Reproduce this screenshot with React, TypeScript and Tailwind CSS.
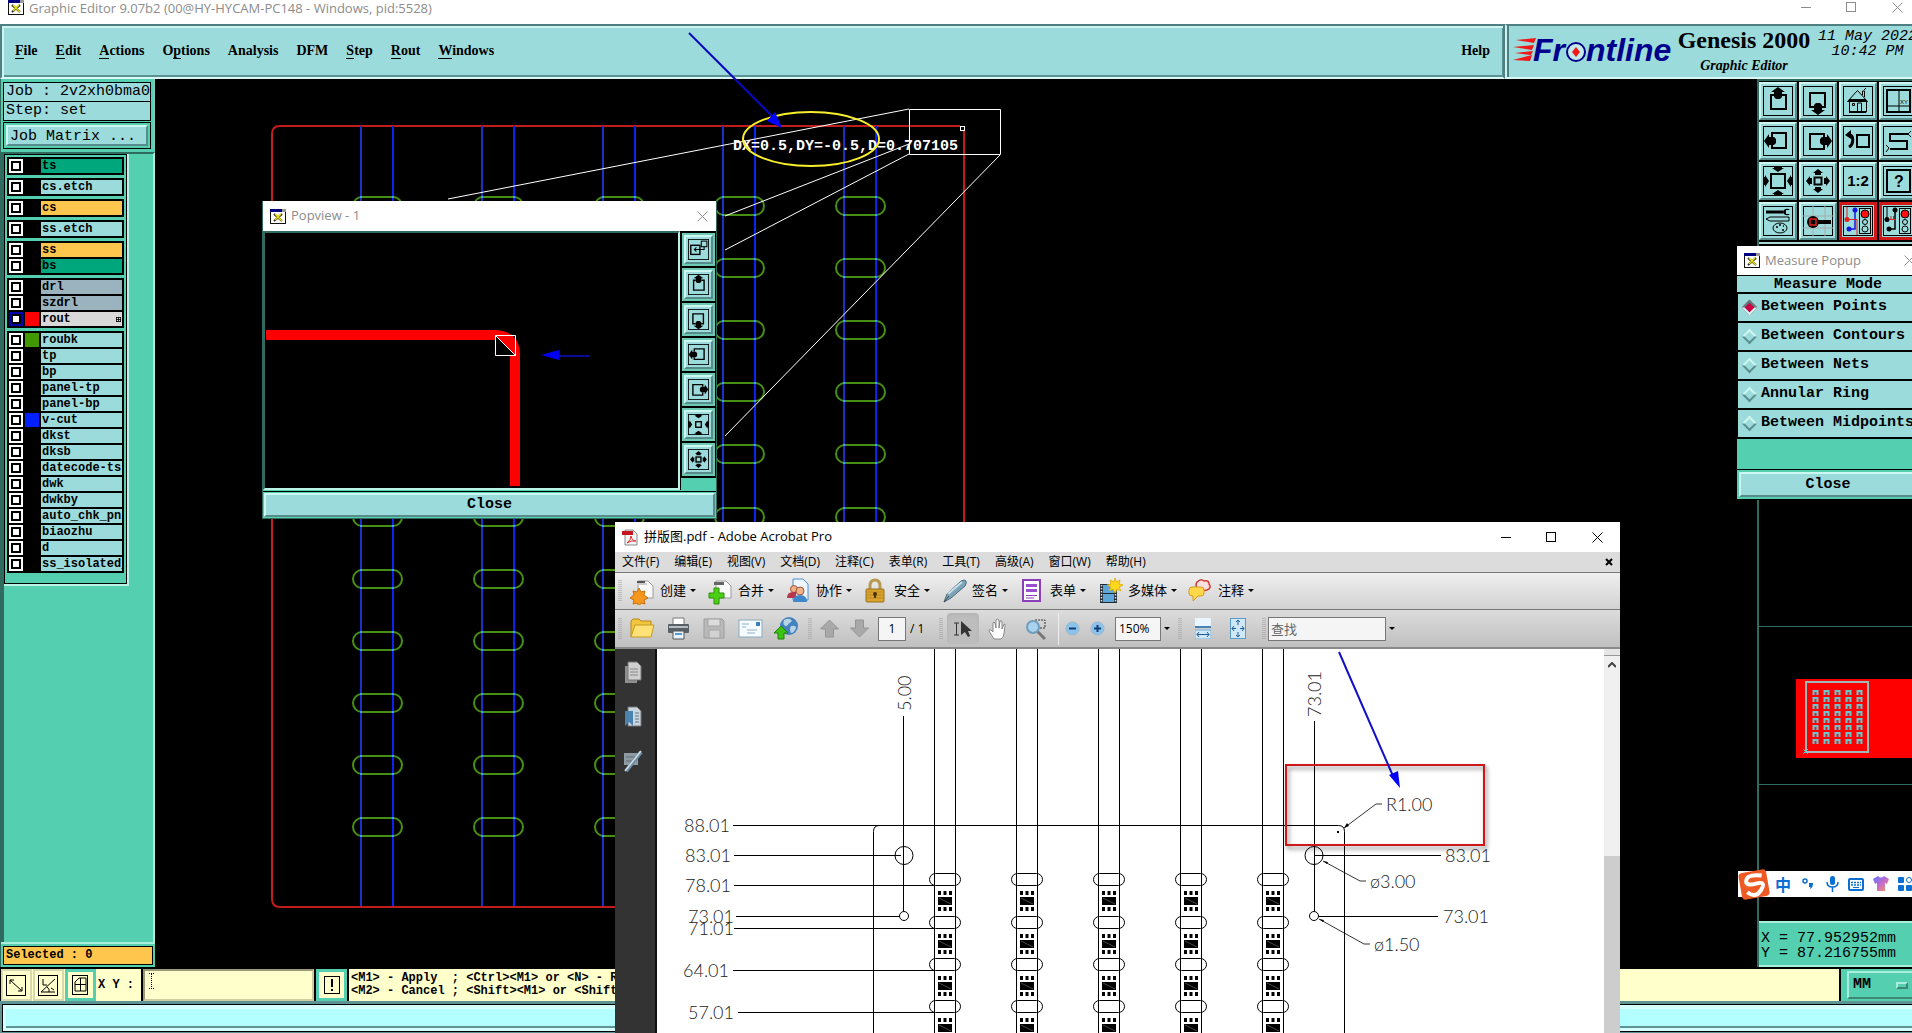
import type { ReactNode } from 'react'

const mono = "font-['Liberation_Mono','Courier_New',monospace] font-bold"
const serif = "font-['Liberation_Serif','Times_New_Roman',serif] font-bold"
const ui = "font-['Open_Sans','Noto_Sans_CJK_SC',sans-serif]"

const raised = 'border-2 border-t-[#cdf7f1] border-l-[#cdf7f1] border-r-[#578c8a] border-b-[#578c8a] bg-[#9cdbdb]'

const menus = [
  { key: 'F', pre: '', rest: 'ile' },
  { key: 'E', pre: '', rest: 'dit' },
  { key: 'A', pre: '', rest: 'ctions' },
  { key: 'p', pre: 'O', rest: 'tions' },
  { key: '', pre: '', rest: 'Analysis' },
  { key: '', pre: '', rest: 'DFM' },
  { key: 'S', pre: '', rest: 'tep' },
  { key: 'R', pre: '', rest: 'out' },
  { key: 'W', pre: '', rest: 'indows' },
]

type Layer = { name: string; bg?: string; swatch?: string; active?: boolean }

const layerGroups: Layer[][] = [
  [{ name: 'ts', bg: 'bg-[#00a67c]' }],
  [{ name: 'cs.etch' }],
  [{ name: 'cs', bg: 'bg-[#ffc64d]' }],
  [{ name: 'ss.etch' }],
  [{ name: 'ss', bg: 'bg-[#ffc64d]' }, { name: 'bs', bg: 'bg-[#00a67c]' }],
  [
    { name: 'drl', bg: 'bg-[#9bb3bf]' },
    { name: 'szdrl', bg: 'bg-[#9bb3bf]' },
    { name: 'rout', bg: 'bg-[#d9d9d9]', swatch: 'bg-[#ff0000]', active: true },
  ],
  [
    { name: 'roubk', swatch: 'bg-[#409900]' },
    { name: 'tp' },
    { name: 'bp' },
    { name: 'panel-tp' },
    { name: 'panel-bp' },
    { name: 'v-cut', swatch: 'bg-[#0020ff]' },
    { name: 'dkst' },
    { name: 'dksb' },
    { name: 'datecode-ts' },
    { name: 'dwk' },
    { name: 'dwkby' },
    { name: 'auto_chk_pnl' },
    { name: 'biaozhu' },
    { name: 'd' },
    { name: 'ss_isolated_' },
  ],
]

function AppIcon() {
  return (
    <svg width="16" height="15" viewBox="0 0 16 15" className="shrink-0">
      <rect width="16" height="15" fill="#111" />
      <rect x="1" y="3" width="14" height="11" fill="#fff" />
      <rect width="12" height="3" fill="#000080" />
      <rect x="12" width="4" height="3" fill="#999" />
      <path d="M4 5l8 7M12 5l-8 7" stroke="#222" strokeWidth="2" />
      <path d="M5 5l7 7M11 5l-6 6" stroke="#e8e000" strokeWidth="1.5" />
    </svg>
  )
}

function CloseIcon() {
  return (
    <svg width="11" height="11" viewBox="0 0 11 11" stroke="currentColor" fill="none">
      <path d="M.5 .5l10 10M10.5 .5l-10 10" />
    </svg>
  )
}

function WindowControls({ className }: { className: string }) {
  return (
    <div className={`flex items-center gap-[35px] ${className}`}>
      <button aria-label="Minimize">
        <svg width="10" height="11" stroke="currentColor"><path d="M0 5.5h10" /></svg>
      </button>
      <button aria-label="Maximize">
        <svg width="11" height="11" stroke="currentColor" fill="none"><rect x=".5" y=".5" width="9" height="9" /></svg>
      </button>
      <button aria-label="Close"><CloseIcon /></button>
    </div>
  )
}

const arrowBlob = 'M15 1l7 5h-3v5l-2 2h-4l-2-2V6H8z'

function Glyph({ name, size }: { name: string; size: number }) {
  const turn: Record<string, number> = { up: 0, right: 90, down: 180, left: 270 }
  let body: ReactNode = null
  if (name in turn) {
    body = (
      <g transform={`rotate(${turn[name]} 15 15)`}>
        <path d="M11 9H8v14h15V9h-4" fill="none" stroke="#000" strokeWidth="2" />
        <path d={arrowBlob} />
      </g>
    )
  } else if (name === 'home') {
    body = (
      <g fill="none" stroke="#000">
        <path d="M4.5 15.5L14.5 4.5l10 11zM6.5 15v11h17V15M14.5 26v-9h4v9M9.5 17.5h2v2h-2zM19.5 9V5h2v6M21 4l2-2" />
        <path d="M6 26h17M6 14h17" strokeWidth="2" />
      </g>
    )
  } else if (name === 'xy') {
    body = (
      <>
        <rect x="4" y="4" width="23" height="22" fill="none" stroke="#000" strokeWidth="2" />
        <path d="M16 4v22M4 20h23" stroke="#000" />
        <text x="17" y="18" className="font-['Liberation_Sans',sans-serif] text-[6px]">XY</text>
      </>
    )
  } else if (name === 'undo') {
    body = (
      <>
        <rect x="14" y="9" width="12" height="12" fill="none" stroke="#000" strokeWidth="2" />
        <path d="M6 9c5 0 5 9 0 12" fill="none" stroke="#000" strokeWidth="3" />
        <path d="M2 9l6-5v9z" />
      </>
    )
  } else if (name === 'path') {
    body = (
      <>
        <path d="M26 8H7v7h17v8H7" fill="none" stroke="#000" strokeWidth="2" />
        <path d="M25 8l3-3M25 8l3 3M6 22l-3-3M6 22l-3 4" stroke="#000" />
      </>
    )
  } else if (name === 'in' || name === 'in-s') {
    const box = name === 'in' ? [8, 8, 14, 14] : [11, 11, 8, 8]
    body = (
      <>
        <rect x={box[0]} y={box[1]} width={box[2]} height={box[3]} fill="none" stroke="#000" strokeWidth="2" />
        {[0, 90, 180, 270].map((a) => (
          <path key={a} transform={`rotate(${a} 15 15)`} d="M11 0h8v2h2l-6 4l-6-4h2z" />
        ))}
      </>
    )
  } else if (name === 'out') {
    body = (
      <>
        <rect x="11.5" y="11.5" width="7" height="7" fill="none" stroke="#000" strokeWidth="2" />
        {[0, 90, 180, 270].map((a) => (
          <path key={a} transform={`rotate(${a} 15 15)`} d="M15 3l5 4h-2v2h-6V7h-2z" />
        ))}
      </>
    )
  } else if (name === '1:2') {
    body = (
      <text x="15" y="20" textAnchor="middle" className="font-['Liberation_Sans',sans-serif] text-[15px] font-bold">1:2</text>
    )
  } else if (name === 'help') {
    body = (
      <>
        <rect x="4" y="4" width="23" height="22" fill="none" stroke="#000" strokeWidth="2" />
        <text x="16" y="21" textAnchor="middle" className="font-['Liberation_Sans',sans-serif] text-[16px] font-bold">?</text>
      </>
    )
  } else if (name === 'tools') {
    body = (
      <>
        <path d="M3 6h17" stroke="#000" strokeWidth="3" />
        <path d="M27 4a4 3 0 1 0 0 4h-4V4z" />
        <path d="M3 13l4-2h19v4H7z" fill="none" stroke="#000" />
        <ellipse cx="17" cy="22" rx="7" ry="5" fill="none" stroke="#000" />
        <path d="M13 21h2M16 19h2M20 20h1M19 24h2" stroke="#000" strokeWidth="1.5" />
      </>
    )
  } else if (name === 'probe') {
    body = (
      <>
        <path d="M10 0v30M22 0v30M0 10h30M0 22h30" stroke="#a9a9a9" />
        <circle cx="10" cy="16" r="6" />
        <path d="M14 16h14" stroke="#000" strokeWidth="4" />
        <rect x="7" y="13" width="6" height="6" fill="none" stroke="#e02020" strokeWidth="1.5" />
      </>
    )
  } else if (name === 'net' || name === 'net2') {
    const c = name === 'net' ? '#1515e8' : '#000'
    const d = name === 'net' ? '#e02020' : '#000'
    body = (
      <>
        <path d="M4 1v12" fill="none" stroke={d} />
        <path d="M6 23h6V4" fill="none" stroke={c} strokeWidth="1.5" />
        <path d={name === 'net' ? 'M4 13.5h10V29' : 'M7 13.5h6M8 10v4M10.5 10v4'} fill="none" stroke="#e02020" />
        <circle cx="4" cy="13.5" r="2.5" fill={d} />
        <circle cx="12" cy="4" r="2.5" fill={c} />
        <circle cx="6" cy="23" r="2.5" fill={c} />
        <rect x="16.5" y="2.5" width="11" height="25" fill="none" stroke="#000" />
        <circle cx="22" cy="8" r="4" fill="#ff1010" stroke="#000" />
        <circle cx="22" cy="16" r="2.5" fill="none" stroke="#000" />
        <circle cx="22" cy="23" r="3" fill="none" stroke="#000" />
      </>
    )
  } else if (name === 'popview') {
    body = (
      <>
        <rect x="4" y="9" width="13" height="13" fill="none" stroke="#000" strokeWidth="2" />
        <rect x="19" y="3" width="8" height="8" fill="none" stroke="#000" strokeWidth="1.5" />
        <path d="M23 11v4H9M12 12l-3 3l3 3" fill="none" stroke="#000" strokeWidth="1.5" />
      </>
    )
  }
  return (
    <svg width={size} height={size} viewBox="0 0 30 30" className="shrink-0">
      <rect x=".5" y=".5" width="29" height="29" fill="#9cdbdb" stroke="#000" strokeWidth={30 / size} />
      {body}
    </svg>
  )
}

const tools = ['up', 'down', 'home', 'xy', 'left', 'right', 'undo', 'path', 'in', 'out', '1:2', 'help', 'tools', 'probe', 'net', 'net2']

function LayerRow({ layer }: { layer: Layer }) {
  return (
    <label className="flex h-4 items-center gap-[2px]">
      <input
        type="checkbox"
        aria-label={layer.name}
        className={`size-[14px] shrink-0 appearance-none border-2 bg-white outline-2 -outline-offset-4 outline-black ${layer.active ? 'border-[#0000b0]' : 'border-white'}`}
      />
      <span className={`size-[14px] shrink-0 ${layer.swatch ?? 'bg-black'}`} />
      <span className={`flex h-[14px] min-w-0 flex-1 items-center justify-between overflow-hidden px-px text-xs leading-[14px] whitespace-nowrap ${layer.bg ?? 'bg-[#9cdbdb]'}`}>
        {layer.name}
        {layer.active && (
          <svg width="5" height="5" className="shrink-0"><path d="M0 .5h5M0 2.5h5M0 4.5h5M.5 0v5M2.5 0v5M4.5 0v5" stroke="#000" strokeWidth=".8" /></svg>
        )}
      </span>
    </label>
  )
}

function LeftPanel() {
  return (
    <aside className={`${mono} flex w-[155px] shrink-0 flex-col border-l border-[#2f6b5f] bg-[#54cfb0]`}>
      <div className="flex flex-col border-r-2 border-[#7cc9bd] px-[2px] pt-[3px]">
        <div className="h-5 border border-black bg-[#9cdbdb] px-[2px] text-[15px] leading-[18px] font-normal whitespace-nowrap">Job : 2v2xh0bma0</div>
        <div className="-mt-px h-5 border border-black bg-[#9cdbdb] px-[2px] text-[15px] leading-[18px] font-normal">Step: set</div>
        <div className="mt-px h-[27px] border border-black p-[2px]">
          <button className={`${raised} block h-full w-full px-[2px] text-left text-[15px] leading-[19px] font-normal`}>Job Matrix ...</button>
        </div>
      </div>
      <div className="mt-[3px] flex-1 border-t-2 border-r-2 border-l-[3px] border-t-[#2f6b5f] border-r-[#a9eedd] border-l-[#2f6b5f]">
        <div className="w-[125px] border-r-2 border-b-2 border-[#b8f3e6]">
          <div className="flex flex-col gap-[3px] border border-black px-[2px] pt-[2px] pb-[10px]">
            {layerGroups.map((g, i) => (
              <div key={i} className="bg-black px-[2px] py-px">
                {g.map((l) => <LayerRow key={l.name} layer={l} />)}
              </div>
            ))}
          </div>
        </div>
      </div>
      <div className="border-t-2 border-[#a9eedd] p-[2px]">
        <div className="h-[19px] border border-black bg-[#ffc64d] px-[2px] text-xs leading-[17px]">Selected : 0</div>
      </div>
    </aside>
  )
}

function BoardCanvas() {
  const cols = [361, 482, 603, 723, 844]
  const rows = Array.from({ length: 11 }, (_, i) => Math.round(197 + i * 62.1))
  return (
    <div className="min-w-0 flex-1 overflow-hidden bg-black">
      <svg width="1602" height="888" viewBox="155 79 1602 888" fill="none">
        <path d="M964 131v776H280q-8 0-8-8V134q0-8 8-8h680" stroke="#c01c1c" strokeWidth="2" />
        {cols.map((x) => (
          <g key={x}>
            {rows.map((y) => <rect key={y} x={x - 8} y={y} width="49" height="18" rx="9" stroke="#478f14" strokeWidth="2" />)}
            <path d={`M${x} 126V906`} stroke="#1c30c8" strokeWidth="2" />
            <path d={`M${x + 32} 126V906`} stroke="#0a24ee" strokeWidth="2" />
            {rows.map((y) => (
              <path key={y} d={`M${x} ${y - 1}v2M${x} ${y + 17}v2M${x + 32} ${y - 1}v2M${x + 32} ${y + 17}v2`} stroke="#3fa0ff" strokeWidth="2" />
            ))}
          </g>
        ))}
        <g stroke="#fff">
          <path d="M909.5 109.5h91v45h-91zM909 109L448 199M909 144L725 216M909 154L725 250M1000 155L725 436" />
          <rect x="960.5" y="126.5" width="4" height="4" />
        </g>
        <text x="733" y="150" fill="#fff" className={`${mono} text-[15px]`}>DX=0.5,DY=-0.5,D=0.707105</text>
        <ellipse cx="811" cy="139" rx="68" ry="27" stroke="#f7ee2c" strokeWidth="2" />
      </svg>
    </div>
  )
}

function Overview() {
  const cols = [1813, 1824, 1835, 1846, 1857]
  return (
    <svg width="153" height="677" viewBox="1759 244 153 677" fill="none" className="block">
      <path d="M1759 626.5h153M1759 784.5h153" stroke="#2f6b5f" />
      <rect x="1796" y="679" width="116" height="79" fill="#f00" />
      <rect x="1806" y="682" width="62" height="70" stroke="#9fb9b9" strokeWidth="2" />
      {cols.map((x) => (
        <g key={x}>
          <path d={`M${x + 2.5} 690v56`} stroke="#6fc4cc" strokeWidth="6" strokeDasharray="5 2" />
          <path d={`M${x + 2.5} 692v54`} stroke="#c03030" strokeWidth="2" strokeDasharray="3 4" />
        </g>
      ))}
      <path d="M1803 749l5 5M1808 749l-5 5" stroke="#5fd0d8" />
    </svg>
  )
}

function RightPanel() {
  return (
    <aside className="flex w-[155px] shrink-0 flex-col overflow-hidden border-l-2 border-[#2f6b5f] bg-black">
      <div className="flex w-[160px] flex-wrap gap-[2px] border-t-2 border-b-2 border-t-[#2f6b5f] border-b-[#a9d8d0] pt-px pb-[2px]">
        {tools.map((t) => (
          <button
            key={t}
            aria-label={t}
            className={`flex size-[38px] items-center justify-center bg-[#9cdbdb] ${
              t.startsWith('net')
                ? 'border-[3px] border-[#d01818]'
                : 'border-2 border-t-[#cdf7f1] border-r-[#578c8a] border-b-[#578c8a] border-l-[#cdf7f1]'
            }`}
          >
            <Glyph name={t} size={30} />
          </button>
        ))}
      </div>
      <div className="flex-1 overflow-hidden"><Overview /></div>
      <div className={`${mono} h-[46px] border-t-2 border-b-2 border-[#a9eedd] bg-[#54cfb0] px-[2px] pt-2 text-[15px] leading-[15px] font-normal whitespace-pre`}>
        <div>X = 77.952952mm</div>
        <div>Y = 87.216755mm</div>
      </div>
    </aside>
  )
}

function Popview() {
  return (
    <section className="absolute top-[201px] left-[262px] flex w-[455px] flex-col border-x border-b border-[#2f6b5f] bg-[#54cfb0]">
      <header className={`${ui} flex h-[30px] items-center gap-[5px] bg-white pr-2 pl-[7px] text-[13px] text-[#8c8c8c]`}>
        <AppIcon />
        <span className="flex-1">Popview - 1</span>
        <button aria-label="Close popview"><CloseIcon /></button>
      </header>
      <div className="flex bg-black">
        <div className="flex-1 overflow-hidden border-2 border-t-[#2f6b5f] border-r-[#b8f3e6] border-b-[#b8f3e6] border-l-[#2f6b5f]">
          <svg width="413" height="255" viewBox="265 233 413 255" className="block">
            <path d="M266 330h230q24 2 24 25v131h-10V352l-14-12H266z" fill="#f00" />
            <path d="M495.5 335.5h20v20h-20z" stroke="#fff" fill="none" />
            <path d="M496 336v19h19z" fill="#000" />
            <path d="M495 335l21 21" stroke="#fff" />
            <path d="M590 356h-32" stroke="#0b0b98" strokeWidth="2" />
            <path d="M541 355l18-5v10z" fill="#0000f0" />
          </svg>
        </div>
        <div className="flex w-9 flex-col gap-[2px] pt-[2px] pl-[2px]">
          {['popview', 'up', 'down', 'left', 'right', 'in-s', 'out'].map((t) => (
            <div key={t} className="size-[33px] border-2 border-[#6cc9b4]">
              <button aria-label={`popview ${t}`} className={`${raised} flex size-full items-center justify-center`}>
                <Glyph name={t} size={21} />
              </button>
            </div>
          ))}
          <div className="-ml-px flex-1 bg-[#54cfb0]" />
        </div>
      </div>
      <div className="mt-px border-t border-black p-px">
        <button className={`${mono} ${raised} block h-6 w-full text-[15px] leading-5`}>Close</button>
      </div>
    </section>
  )
}

const modes = ['Between Points', 'Between Contours', 'Between Nets', 'Annular Ring', 'Between Midpoints']

function MeasurePopup() {
  return (
    <section className={`${mono} absolute top-[246px] left-[1736px] flex w-[184px] flex-col border-x border-b border-black bg-[#54cfb0] text-[15px]`}>
      <header className={`${ui} flex h-[29px] items-center gap-[5px] bg-white pl-[7px] text-[13px] font-normal text-[#8c8c8c]`}>
        <AppIcon />
        <span className="w-[134px]">Measure Popup</span>
        <button aria-label="Close measure popup" className="shrink-0"><CloseIcon /></button>
      </header>
      <fieldset aria-labelledby="measure-mode" className="flex flex-col gap-[2px] border-t border-b-2 border-black bg-black">
        <div id="measure-mode" className="h-4 bg-[#9cdbdb] text-center leading-[17px]">Measure Mode</div>
        {modes.map((m, i) => (
          <label key={m} className="ml-px flex h-[27px] items-center gap-[6px] bg-[#9cdbdb] pl-[6px] whitespace-nowrap">
            <input
              type="radio"
              name="mode"
              defaultChecked={i === 0}
              className="size-[11px] shrink-0 rotate-45 appearance-none border-2 border-t-[#cdf7f1] border-r-[#5b8f8d] border-b-[#5b8f8d] border-l-[#cdf7f1] checked:border-t-[#5b7f7d] checked:border-r-[#cdf7f1] checked:border-b-[#cdf7f1] checked:border-l-[#5b7f7d] checked:bg-[#cc0044]"
            />
            {m}
          </label>
        ))}
      </fieldset>
      <div className="mt-[30px] border-t border-black p-[2px]">
        <button className={`${raised} block h-[25px] w-full leading-[21px]`}>Close</button>
      </div>
    </section>
  )
}

/* ---------- Acrobat ---------- */

const pdfMenus = ['文件(F)', '编辑(E)', '视图(V)', '文档(D)', '注释(C)', '表单(R)', '工具(T)', '高级(A)', '窗口(W)', '帮助(H)']

function Caret() {
  return <svg width="6" height="4" className="shrink-0"><path d="M0 0h6L3 3z" /></svg>
}

function Grip() {
  return (
    <svg width="4" height="24" className="shrink-0">
      <path d="M1 1v22M3 1v22" stroke="#9a9a9a" strokeDasharray="1 1" />
    </svg>
  )
}

const page = <path d="M8 3h10l5 5v12H8z" fill="#fafafa" stroke="#9a9a9a" />

const tasks: { label: string; wide?: boolean; icon: ReactNode }[] = [
  {
    label: '创建',
    icon: (
      <>
        {page}
        <path d="M7 3h8v4H7z" fill="#555" /><path d="M7 6h10" stroke="#ccc" strokeWidth="2" />
        <path d="M9 10l2 4 4-1-1 4 4 3-4 2 1 4-4-1-2 3-2-3-4 1 1-4-4-2 4-3-1-4 4 1z" fill="#f6981d" stroke="#c96f0c" />
      </>
    ),
  },
  {
    label: '合并',
    icon: (
      <>
        {page}
        <path d="M6 4h10v3H6z" fill="#666" />
        <path d="M6 10h5v5h5v5h-5v6H6v-6H1v-5h5z" fill="#4cd015" stroke="#2a8f0a" />
      </>
    ),
  },
  {
    label: '协作',
    icon: (
      <>
        <path d="M7 1h10l5 5v16H7z" fill="#eef6ff" stroke="#4a90d0" />
        <circle cx="8" cy="11" r="3.5" fill="#f0b088" stroke="#a0583a" /><path d="M1 20q0-6 6-6h3v6z" fill="#b8354e" />
        <circle cx="14" cy="13" r="4" fill="#f0b088" stroke="#a0583a" /><path d="M7 24q0-7 7-7t7 7z" fill="#3f87c8" />
      </>
    ),
  },
  {
    label: '安全',
    icon: (
      <>
        <path d="M6 12V8q0-6 5-6t5 6v4" fill="none" stroke="#b79a50" strokeWidth="3" />
        <rect x="2" y="11" width="18" height="13" rx="1" fill="#d9a32e" stroke="#94701c" />
        <path d="M3 14h16M3 17h16M3 20h16" stroke="#bf8a1e" />
        <circle cx="11" cy="16" r="2" fill="#4a3308" /><path d="M11 16v4" stroke="#4a3308" strokeWidth="2" />
      </>
    ),
  },
  {
    label: '签名',
    icon: (
      <>
        <path d="M2 24l3-8L19 3q4-2 5 0t-1 5L9 20z" fill="#7da3b8" stroke="#4d6b7c" />
        <path d="M6 16L20 4" stroke="#c9e0ec" strokeWidth="2" /><path d="M2 24l5-6" stroke="#444" />
      </>
    ),
  },
  {
    label: '表单',
    icon: (
      <>
        <rect x="3" y="2" width="17" height="21" fill="#fff" stroke="#8b3fb8" strokeWidth="2" />
        <path d="M6 6h11v3H6zM6 11h11v3H6z" fill="#9a4fd0" /><path d="M6 17.5h11M6 20h8" stroke="#8b3fb8" />
      </>
    ),
  },
  {
    label: '多媒体',
    wide: true,
    icon: (
      <>
        <rect x="2" y="6" width="17" height="19" fill="#1f2a33" />
        <path d="M5 7h11v8H5zM5 16h11v8H5z" fill="#5fa6d8" />
        <path d="M3.500 7v18M17.500 7v18" stroke="#dfe8ee" strokeWidth="1.5" strokeDasharray="1.5 1.5" />
        <path d="M17 0l1.500 4L22 2l-1 4 4 1-4 2 2 4-4-2-2 4-2-4-4 2 2-4-4-2 4-1-1-4 4 2z" fill="#ffd91c" stroke="#e0a800" strokeWidth=".8" />
      </>
    ),
  },
  {
    label: '注释',
    icon: (
      <>
        <path d="M9 4q4-4 7-1 5-1 5 3 3 4-2 6-9 2-10-2-2-3 0-6z" fill="#f8dede" stroke="#d23c34" strokeWidth="1.5" />
        <path d="M4 9h9q3 0 3 3v3q0 3-3 3h-3l-5 5v-5H4q-3 0-3-3v-3q0-3 3-3z" fill="#ffd94a" stroke="#d99a1c" />
      </>
    ),
  },
]

const fileIcons: Record<string, ReactNode> = {
  打开: (
    <>
      <path d="M1 21V5l2-2h6l2 2h10v4" fill="#f2c63c" stroke="#b88918" />
      <path d="M1 21L5 9h19l-3 12z" fill="#ffe277" stroke="#c79a20" />
    </>
  ),
  打印: (
    <>
      <path d="M7 2h11v7H7z" fill="#fff" stroke="#777" />
      <rect x="2" y="8" width="21" height="9" rx="1" fill="#5a6068" /><path d="M3 11h19" stroke="#b7bcc2" strokeWidth="2" />
      <path d="M7 15h11v8H7z" fill="#e8f3fb" stroke="#555" /><path d="M9 18h7" stroke="#5a9ad0" strokeWidth="2" />
    </>
  ),
  保存: (
    <>
      <path d="M2 3h18l2 2v17H2z" fill="#b9b9b9" stroke="#9c9c9c" />
      <path d="M6 3h12v7H6z" fill="#dcdcdc" stroke="#a4a4a4" /><path d="M7 14h11v8H7z" fill="#d2d2d2" stroke="#a4a4a4" />
    </>
  ),
  邮件: (
    <>
      <rect x="1" y="4" width="23" height="17" fill="#f6fbff" stroke="#8aa9bf" />
      <rect x="18" y="6" width="4" height="4" fill="#3b7fc0" /><path d="M4 8h7M4 11h4M9 14h10M9 17h8" stroke="#8fb0c8" />
    </>
  ),
  上载: (
    <>
      <circle cx="15" cy="10" r="9" fill="#4583be" /><path d="M10 4q6-3 8 1-4 3-5 5-5 0-3-6zM17 10q5-1 5 2-2 5-5 5-2-4 0-7z" fill="#b7d3e8" />
      <path d="M7 10l7 7h-4v6H4v-6H0z" fill="#3cc414" stroke="#1f8008" />
    </>
  ),
}

function SideIcon({ kind }: { kind: 'pages' | 'marks' | 'sign' }) {
  return (
    <svg width="20" height="24" viewBox="0 0 20 24">
      {kind === 'pages' && (
        <>
          <path d="M2 5h12v17H2z" fill="#8f8f8f" />
          <path d="M5 1h9l4 4v14H5z" fill="#cfcfcf" stroke="#777" />
          <path d="M7 8h8M7 11h8M7 14h8" stroke="#888" />
        </>
      )}
      {kind === 'marks' && (
        <>
          <path d="M5 2h9l4 4v15H5z" fill="#c9d6df" stroke="#777" />
          <path d="M2 6h8v15l-4-4-4 4z" fill="#4a82b0" /><path d="M12 8h4M12 11h4M12 14h4M12 17h4" stroke="#678" />
        </>
      )}
      {kind === 'sign' && (
        <>
          <path d="M1 4h14v12H1z" fill="#8e9aa2" /><path d="M3 8h10M3 12h8" stroke="#5d6a73" />
          <path d="M3 22L18 3" stroke="#6a8ba3" strokeWidth="4" /><path d="M2 22L18 2" stroke="#d4dde3" strokeWidth="1.5" />
        </>
      )}
    </svg>
  )
}

const leftDims = [
  { t: '88.01', x: 684, y: 825, from: 733, to: 880 },
  { t: '83.01', x: 685, y: 855, from: 734, to: 901 },
  { t: '78.01', x: 685, y: 885, from: 734, to: 934 },
  { t: '73.01', x: 688, y: 916, from: 736, to: 900 },
  { t: '71.01', x: 688, y: 928, from: 734, to: 934 },
  { t: '64.01', x: 683, y: 970, from: 733, to: 934 },
  { t: '57.01', x: 688, y: 1012, from: 738, to: 934 },
]

function Drawing() {
  const cols = [934, 1016, 1098, 1180, 1262]
  const rows = [873, 916, 958, 1000]
  return (
    <svg width="947" height="384" viewBox="657 649 947 384" fill="none" className="block shrink-0 font-['Lato',sans-serif] text-[18px] font-light">
      <defs>
        <filter id="soft" x="-5%" y="-10%" width="112%" height="125%">
          <feDropShadow dx="2" dy="3" stdDeviation="2" floodColor="#000" floodOpacity=".5" />
        </filter>
      </defs>
      <g stroke="#000">
        <path d="M873.5 1033V831.5q0-6 6-6h459q6 0 6 6V1033" />
        <path d="M903.5 716v195M1314.5 721v190M1314 855.5h127M1318 916.5h120" />
        {leftDims.map((d) => <path key={d.t} d={`M${d.from} ${d.y + 0.5}H${d.to}`} />)}
        {cols.map((x) => (
          <g key={x}>
            <path d={`M${x + 0.5} 648v385M${x + 21.5} 648v385`} />
            {rows.map((y) => (
              <g key={y}>
                <rect x={x - 4.5} y={y + 0.5} width="31" height="12" rx="6" />
                <path d={`M${x + 4} ${y + 28}h14`} strokeWidth="8" />
                <path d={`M${x + 4} ${y + 20}h14M${x + 4} ${y + 36}h14`} strokeWidth="4" strokeDasharray="3 2.5" />
                <path d={`M${x + 5} ${y + 25}l12 6`} stroke="#777" strokeWidth=".6" />
              </g>
            ))}
          </g>
        ))}
        <circle cx="904" cy="855.5" r="9" />
        <circle cx="904" cy="916" r="4.5" />
        <circle cx="1314" cy="855.5" r="9" />
        <circle cx="1314" cy="916" r="4.5" />
        <path d="M1344 828l32-24h6M1323 861l37 20h6M1319 919l45 25h6" strokeWidth=".8" />
      </g>
      <path d="M1344 828l5-2-2-3zM1323 861l5 1-1 2zM1319 919l5 1-1 2zM1337 831h2v2h-2z" fill="#000" />
      <g fill="#222">
        {leftDims.map((d) => <text key={d.t} x={d.x} y={d.y + 7}>{d.t}</text>)}
        <text x="1445" y="862">83.01</text>
        <text x="1443" y="923">73.01</text>
        <text x="1386" y="811">R1.00</text>
        <text x="1370" y="888">ø3.00</text>
        <text x="1374" y="951">ø1.50</text>
        <text transform="translate(911 711) rotate(-90)">5.00</text>
        <text transform="translate(1321 717) rotate(-90)">73.01</text>
      </g>
      <rect x="1286" y="765" width="198" height="80" stroke="#d01818" strokeWidth="2" filter="url(#soft)" />
      <path d="M1339 652l54 124" stroke="#1010c8" strokeWidth="2" />
      <path d="M1400 788l-11-13 9-4z" fill="#0000f8" />
    </svg>
  )
}

function Acrobat() {
  return (
    <section className={`${ui} absolute top-[522px] bottom-0 left-[615px] flex w-[1005px] flex-col overflow-hidden bg-white text-xs text-black`}>
      <header className="flex h-[30px] shrink-0 items-center gap-[6px] pl-[7px]">
        <svg width="16" height="17" viewBox="0 0 16 17">
          <path d="M3 1h8l4 4v11H3z" fill="#f4f4f4" stroke="#888" />
          <path d="M0 2h11v4H0z" fill="#c8141c" />
          <path d="M5 14q4-3 4-7 1 5 5 5-5-1-9 2" fill="none" stroke="#e03030" />
        </svg>
        <h1 className="flex-1 text-[13px]">拼版图.pdf - Adobe Acrobat Pro</h1>
        <WindowControls className="pr-[17px]" />
      </header>
      <nav className="flex h-[21px] shrink-0 items-center gap-[15px] border-b border-[#777] bg-[#dcdcdc] px-[7px] whitespace-nowrap">
        {pdfMenus.map((m) => <button key={m}>{m}</button>)}
        <button aria-label="Close document" className="ml-auto">
          <svg width="8" height="8" stroke="#000" strokeWidth="2"><path d="M1 1l6 6M7 1l-6 6" /></svg>
        </button>
      </nav>
      <div className="flex h-[37px] shrink-0 items-center border-b border-[#777] bg-gradient-to-b from-[#efefef] to-[#d2d2d2] pl-[3px] text-[13px]">
        <Grip />
        <div className="flex pl-2">
          {tasks.map((t) => (
            <button key={t.label} className={`flex items-center gap-[4px] ${t.wide ? 'w-[90px]' : 'w-[78px]'}`}>
              <svg width="26" height="27" viewBox="0 0 26 27" className="shrink-0">{t.icon}</svg>
              <span>{t.label}</span>
              <Caret />
            </button>
          ))}
        </div>
      </div>
      <div className="flex h-[39px] shrink-0 items-center border-b-2 border-[#8a8a8a] bg-gradient-to-b from-[#dcdcdc] to-[#c0c0c0] pl-[3px]">
        <Grip />
        <div className="flex pl-[2px]">
          {Object.entries(fileIcons).map(([label, icon]) => (
            <button key={label} aria-label={label} className="flex w-9 justify-center">
              <svg width="25" height="25" viewBox="0 0 25 25">{icon}</svg>
            </button>
          ))}
        </div>
        <div className="ml-1 flex"><Grip /></div>
        {[0, 180].map((a) => (
          <button key={a} aria-label={a ? '下一页' : '上一页'} className="ml-1 flex w-[26px] justify-center">
            <svg width="19" height="19" viewBox="0 0 19 19">
              <path transform={`rotate(${a} 9.5 9.5)`} d="M9.500 1l9 9h-5v8h-8v-8h-5z" fill="#a9a9a9" stroke="#949494" />
            </svg>
          </button>
        ))}
        <input aria-label="页码" defaultValue="1" className="ml-[6px] h-6 w-7 border border-[#777] bg-[#f5f5f5] text-center" />
        <span className="ml-1 w-[29px]">/ 1</span>
        <Grip />
        <button aria-label="选择" className="ml-1 flex h-[31px] w-8 items-center justify-center rounded-sm bg-[#bdbdbd] shadow-inner">
          <svg width="20" height="20" viewBox="0 0 20 20">
            <path d="M1 4h5M1 16h5M3.5 4v12" stroke="#333" /><path d="M8 2v14l4-3 3 5 2-1-2-5h4z" fill="#333" />
          </svg>
        </button>
        <button aria-label="手形" className="flex w-[38px] justify-center">
          <svg width="20" height="22" viewBox="0 0 20 22">
            <path d="M6 21L1 13q0-2 2-1l2 2V5q1-2 2 0l1 5V2q1-2 3 0v8l1-7q2-1 2 1v7l2-5q2 0 1 2l-1 7q0 4-3 6z" fill="#fff" stroke="#888" />
          </svg>
        </button>
        <button aria-label="放大镜" className="flex w-[38px] justify-center">
          <svg width="22" height="22" viewBox="0 0 22 22">
            <rect x="10" y="2" width="10" height="8" fill="none" stroke="#333" strokeDasharray="2 1" />
            <path d="M12 13l8 8" stroke="#777" strokeWidth="3" /><circle cx="8" cy="9" r="6" fill="#a9d2ee" stroke="#6f9dbd" strokeWidth="2" />
          </svg>
        </button>
        <div className="ml-[3px] h-8 w-px bg-[#eee]" />
        <div className="ml-[2px] flex gap-[2px]">
          {['-', '+'].map((s) => (
            <button key={s} aria-label={s === '+' ? '放大' : '缩小'} className="flex w-[23px] justify-center">
              <svg width="15" height="15" viewBox="0 0 15 15">
                <circle cx="7.5" cy="7.5" r="6.5" fill="#8cc3ec" stroke="#9bb8cc" />
                <path d={s === '+' ? 'M4 7.5h7M7.5 4v7' : 'M4 7.5h7'} stroke="#123f73" strokeWidth="2" />
              </svg>
            </button>
          ))}
        </div>
        <select aria-label="缩放" className="ml-[6px] h-6 w-[46px] appearance-none border border-[#777] bg-[#f5f5f5] px-[3px]">
          <option>150%</option>
        </select>
        <span className="ml-[3px] flex w-[14px]"><Caret /></span>
        <Grip />
        <button aria-label="适合宽度" className="ml-[9px] flex w-[39px] justify-start pl-[4px]">
          <svg width="16" height="21" viewBox="0 0 16 21">
            <rect width="16" height="9" fill="#eaf5fc" /><path d="M0 9h16" stroke="#4683b5" strokeWidth="2" />
            <rect y="12" width="16" height="9" fill="#cfe8f8" stroke="#7ab0d6" /><path d="M2 16.5h12M4 14l-2 2.5L4 19M12 14l2 2.5-2 2.5" fill="none" stroke="#20598c" />
          </svg>
        </button>
        <button aria-label="适合页面" className="flex w-8 justify-start">
          <svg width="16" height="21" viewBox="0 0 16 21">
            <rect x=".5" y=".5" width="15" height="20" fill="#cfe8f8" stroke="#5b9bc9" />
            <path d="M8 2v5M8 14v5M2 10.5h4M10 10.5h4M6 4l2-2 2 2M6 17l2 2 2-2M4 8l-2 2.5L4 13M12 8l2 2.5-2 2.5" fill="none" stroke="#20598c" />
          </svg>
        </button>
        <Grip />
        <input aria-label="查找" placeholder="查找" className="ml-[2px] h-6 w-[118px] border border-[#777] bg-[#f5f5f5] px-[2px] text-[13px] placeholder:text-[#666]" />
        <span className="ml-[3px]"><Caret /></span>
      </div>
      <div className="flex min-h-0 flex-1">
        <div className="flex w-[42px] shrink-0 flex-col items-center gap-5 border-r-2 border-[#111] bg-[#333] pt-3 pr-1">
          <SideIcon kind="pages" />
          <SideIcon kind="marks" />
          <SideIcon kind="sign" />
        </div>
        <div className="min-w-0 flex-1 overflow-hidden"><Drawing /></div>
        <div className="flex w-4 shrink-0 flex-col items-center bg-[#f0f0f0]">
          <div className="h-[7px] w-full border-b border-[#999] bg-[#e6e6e6]" />
          <svg width="8" height="6" className="mt-[6px]"><path d="M0 5l4-4 4 4" fill="none" stroke="#444" strokeWidth="2" /></svg>
          <div className="mt-auto h-[177px] w-full bg-[#cdcdcd]" />
        </div>
      </div>
    </section>
  )
}

function ImeBar() {
  return (
    <div className="absolute top-[871px] right-0 flex h-[26px] w-[174px] items-center bg-white">
      <svg width="32" height="32" viewBox="0 0 32 32" className="shrink-0">
        <g transform="rotate(-10 16 16)">
          <rect x="2" y="3" width="28" height="27" rx="4" fill="#ee5a24" />
          <path d="M25 9Q11 5 9 11t9 5 4 7-14 0" fill="none" stroke="#fff" strokeWidth="4" />
        </g>
      </svg>
      <div className="flex w-[142px] shrink-0 items-center gap-[9px] pl-[5px] text-[#0a6fd0]">
        <span className="w-4 font-['Noto_Sans_CJK_SC',sans-serif] text-base leading-4 font-bold">中</span>
        <svg width="16" height="16" className="ml-px"><circle cx="4" cy="5" r="2" fill="none" stroke="currentColor" strokeWidth="1.5" /><path d="M8 7h4q0 5-3 6 1-2 0-2h-1z" fill="currentColor" /></svg>
        <svg width="13" height="16" viewBox="0 0 13 16"><rect x="4" width="5" height="9" rx="2.5" fill="currentColor" /><path d="M1 6q0 5 5.5 5T12 6M6.500 11v5" fill="none" stroke="currentColor" strokeWidth="1.5" /></svg>
        <svg width="16" height="13" viewBox="0 0 16 13"><rect x="1" y="1" width="14" height="11" rx="1" fill="none" stroke="currentColor" strokeWidth="2" /><path d="M3 4.500h10M3 7h10" stroke="currentColor" strokeWidth="1.5" strokeDasharray="2 1" /><path d="M5 9.500h6" stroke="currentColor" /></svg>
        <svg width="16" height="16" viewBox="0 0 16 16">
          <linearGradient id="shirt" x2="1" y2="1"><stop stopColor="#5a78f8" /><stop offset=".5" stopColor="#c06ad0" /><stop offset="1" stopColor="#ff9a50" /></linearGradient>
          <path d="M0 3l5-3q3 3 6 0l5 3-2 5-2-1v8H4V7L2 8z" fill="url(#shirt)" />
        </svg>
        <svg width="14" height="14" fill="currentColor"><rect width="6" height="6" rx="1" /><rect y="8" width="6" height="6" rx="1" /><circle cx="11" cy="3" r="2.5" fill="none" stroke="currentColor" /><rect x="8" y="8" width="6" height="6" rx="1" /></svg>
      </div>
    </div>
  )
}

function Header() {
  return (
    <div className="flex h-[55px] shrink-0 overflow-hidden bg-[#4f7f80]">
      <nav className={`${serif} flex min-w-0 flex-1 items-center gap-[18px] border-2 border-t-[#4f7f80] border-r-[#4f7f80] border-b-[#d9f7f5] border-l-[#4f7f80] bg-[#9cdbdb] px-[13px] pb-[2px] text-sm shadow-[inset_2px_2px_0_#cdf4f2,inset_-1px_-2px_0_#5b9292]`}>
        {menus.map((m) => (
          <button key={m.rest}>
            {m.pre}<span className="border-b border-black">{m.key}</span>{m.rest}
          </button>
        ))}
        <button className="ml-auto">Help</button>
      </nav>
      <div className="flex w-[407px] shrink-0 items-start border-2 border-t-[#4f7f80] border-r-0 border-b-[#d9f7f5] border-l-[#cdf4f2] bg-[#9cdbdb] shadow-[inset_2px_0_0_#4f7f80]">
        <svg width="164" height="40" viewBox="1509 29 164 40" className="mt-[2px] ml-[3px] shrink-0">
          <path d="M1515 41l20-2-2 5zM1512 48l21-2-2 5zM1514 54l18-2-2 4zM1512 61l19-5-2 6z" fill="#f01818" />
          <text x="1532" y="62" fill="#00008c" className="font-['Liberation_Sans',Arial,sans-serif] text-[32px] font-bold italic">Fr</text>
          <circle cx="1575" cy="53" r="9" fill="#c4e9e9" stroke="#00008c" strokeWidth="2" />
          <path d="M1575 48l4 5-4 5-4-5z" fill="#f01818" />
          <text x="1585" y="62" fill="#00008c" className="font-['Liberation_Sans',Arial,sans-serif] text-[32px] font-bold italic">ntline</text>
        </svg>
        <div className={`${serif} flex w-[140px] shrink-0 flex-col items-center whitespace-nowrap`}>
          <div className="text-2xl leading-7">Genesis 2000</div>
          <div className="pt-[2px] text-sm leading-5 italic">Graphic Editor</div>
        </div>
        <div className={`${mono} shrink-0 pt-[3px] pl-1 text-center text-[15px] leading-[15px] font-normal whitespace-nowrap italic`}>
          <div>11 May 2022</div>
          <div>10:42 PM</div>
        </div>
      </div>
    </div>
  )
}

function PromptBar() {
  const small = 'flex w-[31px] shrink-0 items-center justify-center border-2'
  return (
    <div className={`${mono} flex h-[34px] shrink-0 gap-[2px] border-t-2 border-black bg-black pl-px text-xs`}>
      <div className="flex w-[140px] shrink-0 items-stretch gap-px bg-[#ffffcc]">
        <button aria-label="Corner snap" className={`${small} border-[#d8d8b0]`}>
          <svg width="21" height="21" fill="none" stroke="#000"><rect x=".5" y=".5" width="19" height="20" /><path d="M4 5l12 11M4 9V5h4M12 16h4v-4" /></svg>
        </button>
        <button aria-label="Angle snap" className={`${small} border-[#d8d8b0]`}>
          <svg width="21" height="21" fill="none" stroke="#000"><rect x=".5" y=".5" width="19" height="20" /><path d="M3 17L17 4M3 17h14M5 4v6h4M9 12q3 2 2 5M13 13l3 2" /></svg>
        </button>
        <button aria-label="Grid snap" className={`${small} border-[3px] border-[#54cfb0]`}>
          <svg width="17" height="20" fill="none" stroke="#000"><rect x=".5" y=".5" width="15" height="19" /><path d="M3 16V7l4-4h7v13zM8.5 3v13M3 9.5h11" /></svg>
        </button>
        <label htmlFor="xy" className="pl-px leading-8 whitespace-pre">X Y :</label>
      </div>
      <div className="relative w-[171px] shrink-0">
        <input id="xy" className="h-full w-full border-2 border-t-[#9c9878] border-r-[#d0cca0] border-b-[#d0cca0] border-l-[#9c9878] bg-[#ffffcc] px-2 outline-none" />
        <svg width="5" height="16" className="absolute top-1 left-[6px]"><path d="M0 .5h5M0 15.5h5M2.5 1v14" stroke="#000" strokeDasharray="1 1" /></svg>
      </div>
      <button aria-label="Alert" className={`${small} border-[3px] border-[#54cfb0] bg-[#ffffcc]`}>
        <svg width="16" height="18" fill="none" stroke="#000"><rect x=".5" y=".5" width="15" height="17" /><path d="M8 3v8M8 13v2" strokeWidth="2" /></svg>
      </button>
      <div className="flex-1 overflow-hidden bg-[#ffffcc] px-[2px] pt-[3px] leading-[13px] whitespace-pre">
        <div>{'<M1> - Apply  ; <Ctrl><M1> or <N> - Repeat'}</div>
        <div>{'<M2> - Cancel ; <Shift><M1> or <Shift><M2>'}</div>
      </div>
      <div className="flex w-[71px] shrink-0 bg-[#54cfb0] py-[2px] pl-[6px]">
        <button className="flex flex-1 items-center justify-between border-2 border-r-0 border-t-[#a9eedd] border-b-[#3d8775] border-l-[#a9eedd] pr-1 pl-1 text-[15px]">
          MM
          <span className="h-[7px] w-3 border-2 border-t-[#a9eedd] border-r-[#3d8775] border-b-[#3d8775] border-l-[#a9eedd]" />
        </button>
      </div>
    </div>
  )
}

export default function App() {
  return (
    <div className="relative flex h-screen flex-col overflow-hidden bg-black">
      <header className={`${ui} flex h-6 shrink-0 items-start gap-[5px] bg-white pl-2 text-[13px] text-[#8c8c8c]`}>
        <AppIcon />
        <h1 className="flex-1 leading-4">Graphic Editor 9.07b2 (00@HY-HYCAM-PC148 - Windows, pid:5528)</h1>
        <WindowControls className="pt-[2px] pr-[9px]" />
      </header>
      <Header />
      <main className="flex min-h-0 flex-1">
        <LeftPanel />
        <BoardCanvas />
        <RightPanel />
      </main>
      <PromptBar />
      <footer className="h-8 shrink-0 bg-[#5f9494] pt-[3px] pl-[2px]">
        <div className="h-7 border border-r-0 border-black bg-[#b3ffff] shadow-[inset_3px_4px_0_#d6ffff,inset_0_-3px_0_#d6ffff,inset_0_-5px_0_#5f9494]" />
      </footer>

      <Popview />
      <MeasurePopup />
      <Acrobat />
      <ImeBar />
      <svg width="110" height="110" viewBox="680 25 110 110" className="pointer-events-none absolute top-[25px] left-[680px]">
        <path d="M689 33l84 84" stroke="#0808c0" strokeWidth="2" />
        <path d="M782 128l-15-7 8-9z" fill="#0000ff" />
      </svg>
    </div>
  )
}
